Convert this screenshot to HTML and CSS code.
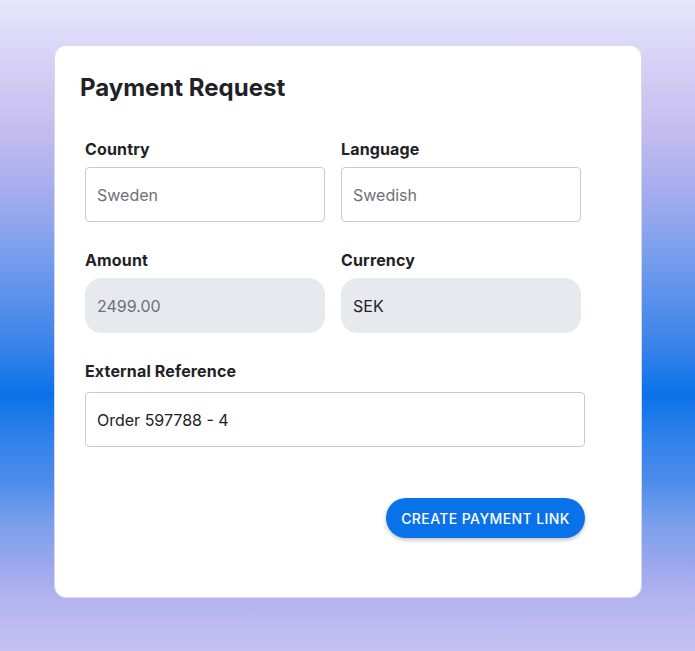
FILE: index.html
```html
<!DOCTYPE html>
<html lang="en">
<head>
<meta charset="utf-8">
<title>Payment Request</title>
<link rel="stylesheet" href="styles.css">
</head>
<body>
<main class="page">
  <section class="card">
    <h1 class="title">Payment Request</h1>
    <form class="form">
      <div class="row">
        <div class="field">
          <label class="label">Country</label>
          <div class="input placeholder">Sweden</div>
        </div>
        <div class="field">
          <label class="label">Language</label>
          <div class="input placeholder">Swedish</div>
        </div>
      </div>
      <div class="row">
        <div class="field">
          <label class="label">Amount</label>
          <div class="input filled muted">2499.00</div>
        </div>
        <div class="field">
          <label class="label">Currency</label>
          <div class="input filled">SEK</div>
        </div>
      </div>
      <div class="field wide">
        <label class="label ext">External Reference</label>
        <div class="input">Order 597788 - 4</div>
      </div>
      <div class="actions">
        <button type="button" class="btn">CREATE PAYMENT LINK</button>
      </div>
    </form>
  </section>
</main>
</body>
</html>
```
FILE: styles.css
```css
* { box-sizing: border-box; }
html, body { margin: 0; padding: 0; }
body {
  font-family: Inter, "Noto Sans", sans-serif;
  color: #222226;
  width: 695px;
  height: 651px;
  overflow: hidden;
  background: linear-gradient(180deg,
    #e7e5fb 0%, #c5bcef 20%, #a3acee 30%, #7da0ed 38%, #5a90eb 46%,
    #3481ea 54%, #0a72e9 60.5%, #2f80ea 67%, #4d8cea 74%, #7ea0ec 81%,
    #95a6ee 86%, #b0b2ee 91%, #c5c1f2 100%);
}
.page {
  padding: 45px 53px 0 54px;
}
.card {
  width: 588px;
  height: 553px;
  background: #ffffff;
  border: 1px solid #d9d8ee;
  border-radius: 12px;
  padding: 27px 25px 0 25px;
}
.title {
  margin: 0;
  font-size: 24px;
  font-weight: 700;
  line-height: 30px;
  color: #222226;
  letter-spacing: 0;
}
.form {
  margin: 35px 0 0 5px;
  width: 500px;
}
.row {
  display: flex;
  gap: 16px;
  margin-bottom: 27px;
}
.field {
  display: flex;
  flex-direction: column;
  width: 240px;
}
.field.wide { width: 500px; }
.label {
  font-size: 16px;
  font-weight: 700;
  line-height: 22px;
  margin-bottom: 7px;
  color: #222226;
  letter-spacing: 0.15px;
}
.label.ext { margin-bottom: 10px; }
.input {
  height: 55px;
  border: 1px solid #c8c9d8;
  border-radius: 4px;
  padding: 0 11px;
  display: flex;
  align-items: center;
  font-size: 16px;
  color: #222226;
}
.input.placeholder { color: #6f6f78; }
.input.filled {
  background: #e8e9ee;
  border-color: #e8e9ee;
  border-radius: 16px;
}
.input.muted { color: #6f6f78; }
.actions {
  display: flex;
  justify-content: flex-end;
  margin-top: 51px;
}
.btn {
  height: 40px;
  width: 199px;
  border: none;
  border-radius: 20px;
  background: #0a72e9;
  color: #ffffff;
  font-family: Inter, "Noto Sans", sans-serif;
  font-size: 14px;
  font-weight: 500;
  letter-spacing: 0.4px;
  box-shadow: 0 2px 4px rgba(0, 0, 0, 0.25);
  padding: 0;
}
```
